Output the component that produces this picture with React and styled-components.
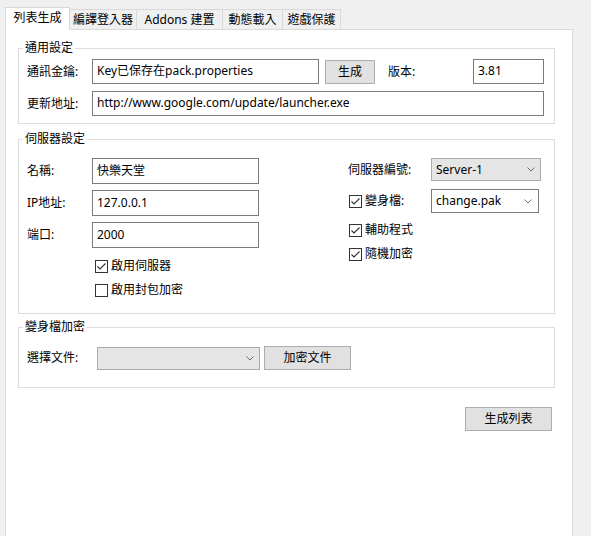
import React from "react";
import styled, { createGlobalStyle } from "styled-components";

const Global = createGlobalStyle`
  html, body { margin: 0; padding: 0; background: #f0f0f0; }
  body {
    width: 591px; height: 536px; overflow: hidden;
    font-family: "Noto Sans", "Noto Sans CJK TC", sans-serif;
    font-size: 12px; color: #000;
  }
  * { box-sizing: border-box; }
`;

const Window = styled.div`
  padding: 7px 0 0 5px;
`;

const TabBar = styled.div`
  display: flex;
  align-items: flex-start;
  height: 22px;
  position: relative;
  z-index: 1;
`;

const Tab = styled.div`
  width: ${(p) => p.$w}px;
  height: ${(p) => (p.$active ? 23 : 20)}px;
  margin-top: ${(p) => (p.$active ? 0 : 2)}px;
  margin-left: ${(p) => (p.$first ? 0 : -1)}px;
  background: ${(p) => (p.$active ? "#ffffff" : "#f0f0f0")};
  border: 1px solid #d9d9d9;
  border-bottom: none;
  display: flex;
  align-items: center;
  justify-content: center;
  padding-bottom: ${(p) => (p.$active ? 3 : 0)}px;
  white-space: nowrap;
  line-height: 16px;
`;

const Panel = styled.div`
  width: 568px;
  height: 520px;
  background: #fff;
  border: 1px solid #d9d9d9;
  padding: 18px 17px 0 12px;
  display: flex;
  flex-direction: column;
`;

const Group = styled.div`
  border: 1px solid #dcdcdc;
  margin-top: ${(p) => p.$mt || 0}px;
  padding: 0 ${(p) => p.$pr || 10}px ${(p) => p.$pb}px 8px;
  display: flex;
  flex-direction: column;
`;

const Caption = styled.div`
  align-self: flex-start;
  margin: -9px 0 0 -4px;
  padding: 0 2px;
  background: #fff;
  line-height: 16px;
  height: 16px;
`;

const Rows = styled.div`
  display: flex;
  flex-direction: column;
  gap: ${(p) => p.$gap}px;
  margin-top: ${(p) => p.$mt}px;
`;

const Row = styled.div`
  display: flex;
  align-items: center;
`;

const Label = styled.span`
  width: ${(p) => p.$w}px;
  margin-left: ${(p) => p.$ml || 0}px;
  flex: none;
  line-height: 16px;
  white-space: nowrap;
`;

const TextBox = styled.div`
  width: ${(p) => p.$w}px;
  height: ${(p) => p.$h || 25}px;
  border: 1px solid #7a7a7a;
  background: #fff;
  padding: 0 4px 1px;
  display: flex;
  align-items: center;
  line-height: 16px;
  white-space: nowrap;
  overflow: hidden;
`;

const Button = styled.div`
  width: ${(p) => p.$w}px;
  height: ${(p) => p.$h || 24}px;
  margin-left: ${(p) => p.$ml || 0}px;
  background: #e1e1e1;
  border: 1px solid #adadad;
  display: flex;
  align-items: center;
  justify-content: center;
  line-height: 16px;
  flex: none;
`;

const Combo = styled.div`
  width: ${(p) => p.$w}px;
  height: ${(p) => p.$h || 23}px;
  background: ${(p) => (p.$editable ? "#fff" : "#e5e5e5")};
  border: 1px solid ${(p) => (p.$editable ? "#7a7a7a" : "#acacac")};
  display: flex;
  align-items: center;
  justify-content: space-between;
  padding: 0 ${(p) => (p.$editable ? 6 : 5)}px 0 4px;
  line-height: 16px;
  flex: none;
`;

const Chevron = () => (
  <svg width="8" height="5" viewBox="0 0 8 5">
    <polyline points="0.5,0.5 4,4 7.5,0.5" fill="none" stroke="#6a6a6a" strokeWidth="1" />
  </svg>
);

const CheckRow = styled.label`
  display: flex;
  align-items: center;
  height: 16px;
  gap: 3px;
  margin-left: ${(p) => p.$ml || 0}px;
  margin-top: ${(p) => p.$mt || 0}px;
  white-space: nowrap;
  line-height: 16px;
`;

const Box = styled.span`
  width: 13px;
  height: 13px;
  border: 1px solid #333;
  background: #fff;
  display: flex;
  align-items: center;
  justify-content: center;
  flex: none;
`;

const Check = ({ checked, label, ml, mt }) => (
  <CheckRow $ml={ml} $mt={mt}>
    <Box>
      {checked && (
        <svg width="11" height="11" viewBox="0 0 11 11">
          <polyline points="1.5,5.5 4,8 9.5,2.5" fill="none" stroke="#333" strokeWidth="1.1" />
        </svg>
      )}
    </Box>
    {label}
  </CheckRow>
);

const Columns = styled.div`
  display: flex;
  justify-content: space-between;
  padding-right: 3px;
`;

const Col = styled.div`
  display: flex;
  flex-direction: column;
  gap: ${(p) => p.$gap}px;
  margin-top: ${(p) => p.$mt}px;
`;

const Footer = styled.div`
  display: flex;
  justify-content: flex-end;
  margin-top: 19px;
  padding-right: 3px;
`;

export default function App() {
  return (
    <>
      <Global />
      <Window>
        <TabBar>
          <Tab $active $first $w={65}>列表生成</Tab>
          <Tab $w={68}>編譯登入器</Tab>
          <Tab $w={87}>Addons 建置</Tab>
          <Tab $w={61}>動態載入</Tab>
          <Tab $w={59}>遊戲保護</Tab>
        </TabBar>
        <Panel>
          <Group $pb={7}>
            <Caption>通用設定</Caption>
            <Rows $gap={7} $mt={3}>
              <Row>
                <Label $w={65}>通訊金鑰:</Label>
                <TextBox $w={227}>Key已保存在pack.properties</TextBox>
                <Button $w={50} $ml={6}>生成</Button>
                <Label $w={85} $ml={13}>版本:</Label>
                <TextBox $w={71}>3.81</TextBox>
              </Row>
              <Row>
                <Label $w={65}>更新地址:</Label>
                <TextBox $w={452}>http://www.google.com/update/launcher.exe</TextBox>
              </Row>
            </Rows>
          </Group>

          <Group $mt={15} $pb={15}>
            <Caption>伺服器設定</Caption>
            <Columns>
              <Col $gap={6} $mt={11}>
                <Row>
                  <Label $w={65}>名稱:</Label>
                  <TextBox $w={167} $h={26}>快樂天堂</TextBox>
                </Row>
                <Row>
                  <Label $w={65}>IP地址:</Label>
                  <TextBox $w={167} $h={26}>127.0.0.1</TextBox>
                </Row>
                <Row>
                  <Label $w={65}>端口:</Label>
                  <TextBox $w={167} $h={26}>2000</TextBox>
                </Row>
                <Rows $gap={8} $mt={4}>
                  <Check checked label="啟用伺服器" ml={68} />
                  <Check label="啟用封包加密" ml={68} />
                </Rows>
              </Col>
              <Col $gap={8} $mt={11}>
                <Row>
                  <Label $w={83}>伺服器編號:</Label>
                  <Combo $w={110}>Server-1<Chevron /></Combo>
                </Row>
                <Row>
                  <Label $w={82} $ml={1}>
                    <Check checked label="變身檔:" />
                  </Label>
                  <Combo $editable $w={108} $h={24}>change.pak<Chevron /></Combo>
                </Row>
                <Check checked label="輔助程式" ml={1} mt={1} />
                <Check checked label="隨機加密" ml={1} />
              </Col>
            </Columns>
          </Group>

          <Group $mt={13} $pb={17}>
            <Caption>變身檔加密</Caption>
            <Rows $gap={0} $mt={11}>
              <Row>
                <Label $w={70}>選擇文件:</Label>
                <Combo $w={163}>
                  <span />
                  <Chevron />
                </Combo>
                <Button $w={87} $h={24} $ml={4}>加密文件</Button>
              </Row>
            </Rows>
          </Group>

          <Footer>
            <Button $w={87} $h={24}>生成列表</Button>
          </Footer>
        </Panel>
      </Window>
    </>
  );
}
